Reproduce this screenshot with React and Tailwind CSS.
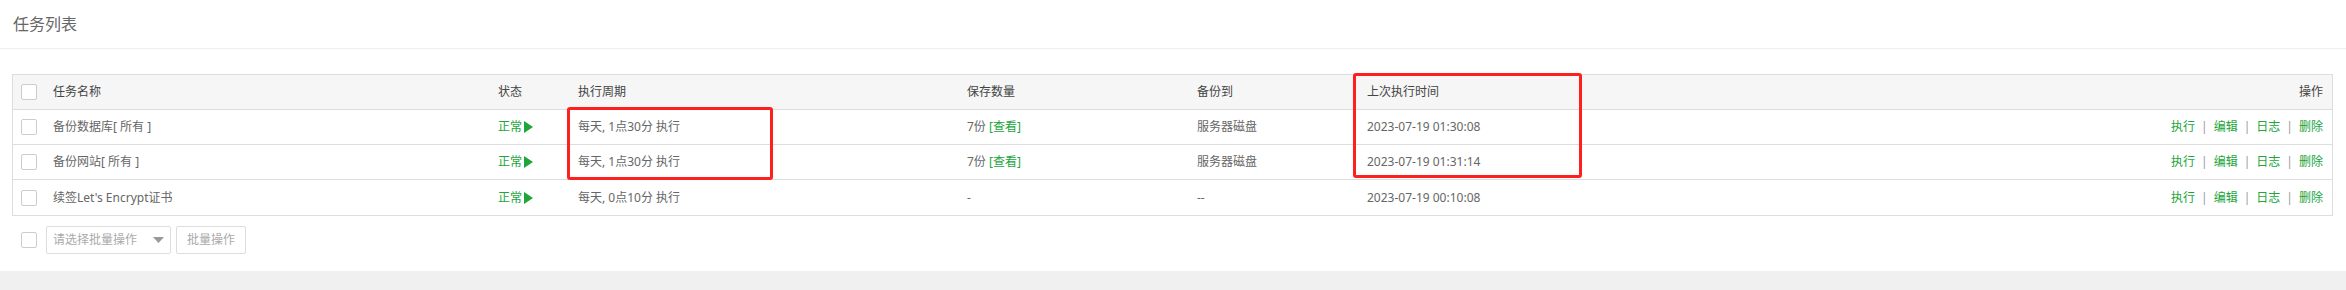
import React from "react";

const rows = [
  { name: "备份数据库[ 所有 ]", period: "每天, 1点30分 执行", save: "7份", view: true, to: "服务器磁盘", time: "2023-07-19 01:30:08" },
  { name: "备份网站[ 所有 ]", period: "每天, 1点30分 执行", save: "7份", view: true, to: "服务器磁盘", time: "2023-07-19 01:31:14" },
  { name: "续签Let's Encrypt证书", period: "每天, 0点10分 执行", save: "-", view: false, to: "--", time: "2023-07-19 00:10:08" },
];

const gridCols = "grid grid-cols-[40px_445px_80px_389px_230px_170px_400px_1fr] items-center";

function Checkbox() {
  return <span className="block w-4 h-4 border border-[#cccccc] rounded-[2px] bg-white" />;
}

function Play() {
  return (
    <svg width="9" height="12" viewBox="0 0 9 12" className="ml-[2px]">
      <path d="M0 0 L9 6 L0 12 Z" fill="#20a53a" />
    </svg>
  );
}

export default function App() {
  return (
    <div
      className="relative w-full bg-white text-[12px] text-[#666]"
      style={{ fontFamily: '"Noto Sans", "Noto Sans CJK SC", sans-serif' }}
    >
      <div className="h-[49px] flex items-center px-[13px] border-b border-[#eeeeee]">
        <span className="text-[16px] text-[#666] leading-none">任务列表</span>
      </div>

      <div className="pt-[25px] pl-[12px] pr-[13px] pb-[17px]">
        <div className="border border-[#dddddd]">
          <div className={`${gridCols} h-[35px] bg-[#f6f6f6] text-[#444] border-b border-[#dddddd]`}>
            <div className="pl-[8px]"><Checkbox /></div>
            <div>任务名称</div>
            <div>状态</div>
            <div>执行周期</div>
            <div>保存数量</div>
            <div>备份到</div>
            <div>上次执行时间</div>
            <div className="text-right pr-[9px]">操作</div>
          </div>
          {rows.map((r, i) => (
            <div
              key={i}
              className={`${gridCols} h-[35px] ${i < rows.length - 1 ? "border-b border-[#dddddd]" : ""}`}
            >
              <div className="pl-[8px]"><Checkbox /></div>
              <div>{r.name}</div>
              <div className="flex items-center text-[#20a53a]">正常<Play /></div>
              <div>{r.period}</div>
              <div>
                {r.save}
                {r.view && <span className="text-[#20a53a]"> [查看]</span>}
              </div>
              <div>{r.to}</div>
              <div>{r.time}</div>
              <div className="flex justify-end items-center pr-[9px]">
                <span className="text-[#20a53a]">执行</span>
                <span className="text-[#999] px-[6px]">|</span>
                <span className="text-[#20a53a]">编辑</span>
                <span className="text-[#999] px-[6px]">|</span>
                <span className="text-[#20a53a]">日志</span>
                <span className="text-[#999] px-[6px]">|</span>
                <span className="text-[#20a53a]">删除</span>
              </div>
            </div>
          ))}
        </div>

        <div className="flex items-center mt-[10px] pl-[9px]">
          <Checkbox />
          <div className="ml-[9px] w-[125px] h-[28px] border border-[#dddddd] rounded-[2px] flex items-center justify-between pl-[6px] pr-[6px] text-[#aaa]">
            <span>请选择批量操作</span>
            <svg width="11" height="6" viewBox="0 0 11 6">
              <path d="M0 0 L11 0 L5.5 6 Z" fill="#999" />
            </svg>
          </div>
          <div className="ml-[5px] w-[70px] h-[28px] border border-[#dddddd] rounded-[2px] flex items-center justify-center text-[#aaa]">
            批量操作
          </div>
        </div>
      </div>

      <div className="h-[19px] bg-[#f0f0f0]" />

      <div className="absolute left-[567px] top-[107px] w-[206px] h-[73px] border-[3px] border-[#ff1f1f] rounded-[3px] pointer-events-none" />
      <div className="absolute left-[1353px] top-[73px] w-[229px] h-[105px] border-[3px] border-[#ff1f1f] rounded-[3px] pointer-events-none" />
    </div>
  );
}
